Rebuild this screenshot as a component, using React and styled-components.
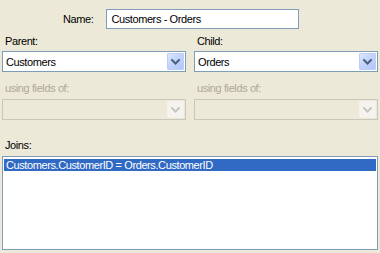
import React from 'react';
import styled, { createGlobalStyle } from 'styled-components';

const GlobalStyle = createGlobalStyle`
  html, body {
    margin: 0;
    padding: 0;
    background: #ece9d8;
  }
  body {
    font-family: "Liberation Sans", Arial, sans-serif;
    font-size: 11px;
    letter-spacing: -0.4px;
    color: #000;
  }
`;

const Dialog = styled.div`
  width: 380px;
  height: 253px;
  box-sizing: border-box;
  padding: 9px 2px 0 2px;
  display: flex;
  flex-direction: column;
`;

const NameRow = styled.div`
  display: flex;
  align-items: center;
  padding-left: 61px;
  gap: 13px;
`;

const Label = styled.div`
  line-height: 13px;
  height: 13px;
  padding-left: ${(p) => (p.$inset ? '3px' : '0')};
  color: ${(p) => (p.$disabled ? '#aca899' : '#000')};
`;

const TextBox = styled.div`
  width: 193px;
  height: 20px;
  box-sizing: border-box;
  border: 1px solid #7f9db9;
  background: #fff;
  padding: 0 4px;
  display: flex;
  align-items: center;
`;

const Grid = styled.div`
  display: grid;
  grid-template-columns: 184px 184px;
  column-gap: 8px;
  margin-top: ${(p) => p.$top}px;
`;

const Field = styled.div`
  display: flex;
  flex-direction: column;
  gap: ${(p) => p.$gap}px;
`;

const Combo = styled.div`
  height: 21px;
  box-sizing: border-box;
  border: 1px solid ${(p) => (p.$disabled ? '#c9c7ba' : '#7f9db9')};
  background: ${(p) => (p.$disabled ? '#ece9d8' : '#fff')};
  display: flex;
  align-items: stretch;
  padding: 1px;
`;

const ComboText = styled.div`
  flex: 1;
  display: flex;
  align-items: center;
  padding-left: 2px;
`;

const DropButton = styled.div`
  width: 17px;
  box-sizing: border-box;
  border: 1px solid ${(p) => (p.$disabled ? '#f2f1eb' : '#bccef7')};
  border-radius: 1px;
  background: ${(p) =>
    p.$disabled
      ? '#f4f3ee'
      : 'linear-gradient(135deg, #dce6fd 0%, #c3d4fb 45%, #b1c6f7 100%)'};
  display: flex;
  align-items: center;
  justify-content: center;
`;

const Chevron = ({ color }) => (
  <svg width="9" height="6" viewBox="0 0 9 6">
    <polyline
      points="1,1 4.5,4.5 8,1"
      fill="none"
      stroke={color}
      strokeWidth="2"
      strokeLinecap="square"
    />
  </svg>
);

const JoinsLabel = styled(Label)`
  margin-top: 19px;
  margin-bottom: 4px;
`;

const ListBox = styled.div`
  height: 94px;
  box-sizing: border-box;
  border: 1px solid #7f9db9;
  background: #fff;
  padding: 2px 1px;
`;

const ListItem = styled.div`
  height: 12px;
  line-height: 12px;
  padding-left: 2px;
  background: ${(p) => (p.$selected ? '#316ac5' : 'transparent')};
  color: ${(p) => (p.$selected ? '#fff' : '#000')};
`;

const ComboBox = ({ value, disabled }) => (
  <Combo $disabled={disabled}>
    <ComboText>{value}</ComboText>
    <DropButton $disabled={disabled}>
      <Chevron color={disabled ? '#c9c7ba' : '#4d6185'} />
    </DropButton>
  </Combo>
);

export default function App() {
  return (
    <>
      <GlobalStyle />
      <Dialog>
        <NameRow>
          <span>Name:</span>
          <TextBox>Customers - Orders</TextBox>
        </NameRow>

        <Grid $top={6}>
          <Field $gap={3}>
            <Label $inset>Parent:</Label>
            <ComboBox value="Customers" />
          </Field>
          <Field $gap={3}>
            <Label $inset>Child:</Label>
            <ComboBox value="Orders" />
          </Field>
        </Grid>

        <Grid $top={10}>
          <Field $gap={4}>
            <Label $inset $disabled>using fields of:</Label>
            <ComboBox disabled />
          </Field>
          <Field $gap={4}>
            <Label $inset $disabled>using fields of:</Label>
            <ComboBox disabled />
          </Field>
        </Grid>

        <JoinsLabel $inset>Joins:</JoinsLabel>
        <ListBox>
          <ListItem $selected>Customers.CustomerID = Orders.CustomerID</ListItem>
        </ListBox>
      </Dialog>
    </>
  );
}
